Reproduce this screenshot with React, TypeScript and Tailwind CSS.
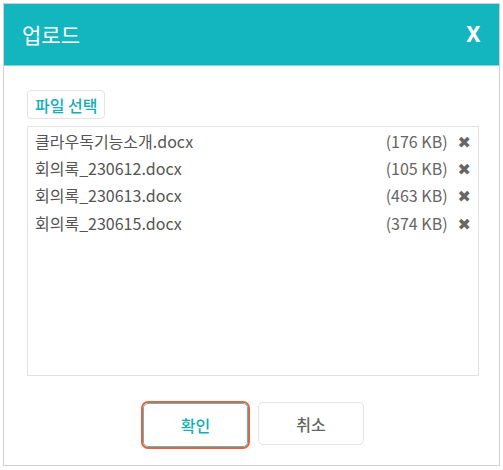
import React from "react";

const files = [
  { name: "클라우독기능소개.docx", size: "(176 KB)" },
  { name: "회의록_230612.docx", size: "(105 KB)" },
  { name: "회의록_230613.docx", size: "(463 KB)" },
  { name: "회의록_230615.docx", size: "(374 KB)" },
];

export default function App() {
  return (
    <div
      className="w-[503px] h-[470px] bg-white pt-[3px] pl-[3px]"
      style={{ fontFamily: '"Noto Sans CJK KR", "Noto Sans", sans-serif' }}
    >
      <div className="w-[497px] h-[463px] border border-[#d0d0d0] bg-white flex flex-col">
        <div className="h-[62px] bg-[#13b5bf] border-b border-[#7fd6db] flex items-center justify-between pl-[18px] pr-[17px]">
          <span className="text-white text-[21px] leading-none">업로드</span>
          <span
            className="text-white text-[30px] font-black leading-none mt-[-6px] scale-x-[0.85]"
            style={{ fontFamily: '"Liberation Sans", Arial, sans-serif' }}
          >
            x
          </span>
        </div>
        <div className="flex flex-col pl-[23px] pr-[20px] pt-[24px]">
          <div>
            <button className="h-[29px] px-[7px] border border-[#e3e3e3] rounded-[4px] bg-white text-[#13aeb8] text-[16px] font-medium leading-none">
              파일 선택
            </button>
          </div>
          <div className="mt-[7px] h-[250px] border border-[#e2e2e2] pt-[0px] pl-[7px] pr-[7px]">
            {files.map((f) => (
              <div key={f.name} className="h-[27.3px] flex items-center text-[16px] text-[#555555]">
                <span className="flex-1">{f.name}</span>
                <span className="text-[#666666]">{f.size}</span>
                <span
                  className="ml-[10px] mt-[4px] text-[#666666] text-[16px] leading-none"
                  style={{ fontFamily: '"DejaVu Sans", sans-serif' }}
                >
                  ✖
                </span>
              </div>
            ))}
          </div>
        </div>
        <div className="flex justify-center gap-[8px] mt-[25px] ml-[2px]">
          <div className="rounded-[7px] border-2 border-[#f45d3c] p-0">
            <button className="w-[105px] h-[44px] rounded-[5px] border border-[#3fc6cc] bg-white text-[#13aeb8] text-[16px] font-medium">
              확인
            </button>
          </div>
          <button className="w-[106px] h-[43px] mt-[1px] rounded-[5px] border border-[#e3e3e3] bg-white text-[#666666] text-[16px] font-medium">
            취소
          </button>
        </div>
      </div>
    </div>
  );
}
